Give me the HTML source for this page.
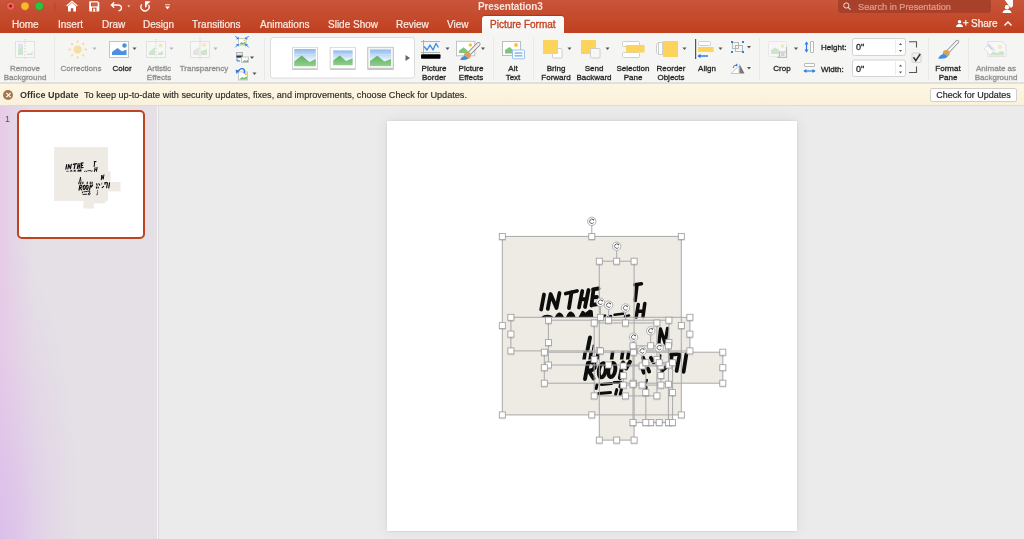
<!DOCTYPE html>
<html><head><meta charset="utf-8">
<style>
*{margin:0;padding:0;box-sizing:border-box}
html,body{width:1024px;height:539px;overflow:hidden;background:#e9e9e9;font-family:"Liberation Sans",sans-serif}
.abs{position:absolute}
.lbl,.tab,#notif div,#title div,#left div{will-change:transform}
#title{position:absolute;left:0;top:0;width:1024px;height:33px;background:linear-gradient(#c9553a,#c0401f)}
.tab{position:absolute;top:17.5px;font-size:10px;color:#fbece6;white-space:nowrap;line-height:14px;-webkit-text-stroke:0.2px currentColor}
#ribbon{position:absolute;left:0;top:33px;width:1024px;height:50px;background:#f5f5f4;border-bottom:1px solid #e0e0e0}
.lbl{position:absolute;font-size:8px;line-height:9px;color:#262626;text-align:center;white-space:nowrap;-webkit-text-stroke:0.3px currentColor;margin-top:0.5px}
.dis{color:#8f8f8f}
.sep{position:absolute;top:6px;width:1px;height:42px;background:#e2e2e2}
.dd{position:absolute;width:0;height:0;border-left:2.5px solid transparent;border-right:2.5px solid transparent;border-top:3px solid #555}
#notif{position:absolute;left:0;top:83px;width:1024px;height:23px;background:linear-gradient(#fdf6e2,#faf1dc);border-top:0.5px solid #e2e0da;border-bottom:1.5px solid #dfdbd0;z-index:2}
#left{position:absolute;left:0;top:105px;width:157px;height:434px;background:radial-gradient(ellipse 80px 300px at 0 100%,rgba(218,190,235,0.9),rgba(225,200,232,0.4) 60%,rgba(228,224,230,0) 100%),linear-gradient(90deg,rgba(232,200,232,0.9) 0px,rgba(230,205,230,0.6) 14px,rgba(228,224,230,0) 34px),#e4e0e6}
#main{position:absolute;left:159px;top:105px;width:865px;height:434px;background:#ebebeb}
#slide{position:absolute;left:387px;top:121px;width:410px;height:410px;background:#fff;box-shadow:0 0 2px rgba(0,0,0,0.12),0 0 14px rgba(0,0,0,0.07)}
</style></head><body>
<div id="title">
  <div class="tab" style="left:12px">Home</div>
  <div class="tab" style="left:58px">Insert</div>
  <div class="tab" style="left:102px">Draw</div>
  <div class="tab" style="left:143px">Design</div>
  <div class="tab" style="left:192px">Transitions</div>
  <div class="tab" style="left:260px">Animations</div>
  <div class="tab" style="left:328px">Slide Show</div>
  <div class="tab" style="left:396px">Review</div>
  <div class="tab" style="left:447px">View</div>
  <div class="abs" style="left:481.6px;top:16.4px;width:82px;height:16.6px;background:linear-gradient(#fdfdfd,#f5f5f4);border-radius:3px 3px 0 0;box-shadow:0 -0.5px 1px rgba(100,20,0,0.3)"></div>
  <div class="tab" style="left:490px;color:#c64524;-webkit-text-stroke:0.35px currentColor">Picture Format</div>
  <div class="abs" style="left:478.3px;top:0px;font-size:10px;letter-spacing:-0.12px;font-weight:bold;color:#f8e6df;line-height:13px">Presentation3</div>
  <div class="abs" style="left:838px;top:-1px;width:153px;height:14px;background:#a9402a;border-radius:3px"></div>
  <div class="abs" style="left:858px;top:0.5px;font-size:9.2px;color:#dda08e;line-height:13px;-webkit-text-stroke:0.2px currentColor">Search in Presentation</div>
  <div class="abs" style="left:971px;top:16.5px;font-size:10px;color:#fbeee8;line-height:13px;-webkit-text-stroke:0.25px currentColor">Share</div>
<svg class="abs" style="left:0;top:0" width="1024" height="33" viewBox="0 0 1024 33">
 <circle cx="10.6" cy="6.1" r="4.2" fill="#f25f58" stroke="#b8402e" stroke-width="0.7"/>
 <circle cx="10.6" cy="6.1" r="1.35" fill="#7e1a14"/>
 <circle cx="25" cy="6.1" r="4.2" fill="#fbb92e" stroke="#c0622a" stroke-width="0.7"/>
 <circle cx="39.2" cy="6.1" r="4.2" fill="#27c540" stroke="#3f8a2f" stroke-width="0.7"/>
 <rect x="54.5" y="2" width="0.8" height="10" fill="#b3432b"/>
 <!-- home -->
 <path d="M66.6 6 L72 1.2 L77.4 6" fill="none" stroke="#fff" stroke-width="1.2" stroke-linejoin="miter"/>
 <path d="M68 11.5 V6.2 L72 2.8 L76 6.2 V11.5 H73.3 V8.6 Q72 7.4 70.8 8.6 V11.5Z" fill="#fff"/>
 <!-- save -->
 <path d="M89.2 2 Q89.2 1.3 90 1.3 H97.8 L99.3 2.8 V10.8 Q99.3 11.5 98.5 11.5 H90 Q89.2 11.5 89.2 10.8Z" fill="#fff"/>
 <rect x="91" y="2.5" width="6.6" height="3.9" fill="#c9502f"/>
 <rect x="91.8" y="3.3" width="5" height="2.3" fill="#d8846d" opacity="0.5"/>
 <rect x="92" y="7.6" width="4.5" height="3.9" fill="#c9502f"/>
 <rect x="93.2" y="8.6" width="2" height="2.9" fill="#fff"/>
 <!-- undo -->
 <path d="M111.8 5 H117.5 Q121.5 5 121.5 8 Q121.5 10.5 118.5 10.8" fill="none" stroke="#fff" stroke-width="1.3"/>
 <path d="M114.2 2.2 L111.4 5 L114.2 7.8" fill="none" stroke="#fff" stroke-width="1.3"/>
 <path d="M127.3 5.3 H130.3 L128.8 7.4Z" fill="#f2c2b2"/>
 <!-- redo -->
 <path d="M141.7 4.4 A4.1 4.1 0 1 0 148.6 4.8" fill="none" stroke="#fff" stroke-width="1.35"/>
 <path d="M145 1.3 H150.6 L146.6 5.3 V7.2 H145Z" fill="#fff"/>
 <!-- customize -->
 <rect x="165" y="4" width="5" height="1.3" fill="#f0b7a6"/>
 <path d="M165 6.4 H170 L167.5 9.2Z" fill="#fff"/>
 <!-- search -->
 <circle cx="846.3" cy="5.5" r="2.6" fill="none" stroke="#f3ddd6" stroke-width="1"/>
 <path d="M848.2 7.4 L850.5 9.7" stroke="#f3ddd6" stroke-width="1.1"/>
 <!-- person icon top right -->
 <path d="M1004 -1 H1013 V6 L1011 8 L1009 6 Z" fill="#fff" opacity="0.95"/>
 <circle cx="1007" cy="7.2" r="2.2" fill="#fff"/>
 <path d="M1002.5 13 Q1003 9.8 1007 9.8 Q1011 9.8 1011.5 13Z" fill="#fff"/>
 <!-- share person+ -->
 <circle cx="959.5" cy="21.7" r="1.8" fill="#fff"/>
 <path d="M956 27 Q956.3 24 959.5 24 Q962.7 24 963 27Z" fill="#fff"/>
 <path d="M963 22.8 H968.5 M965.8 20 V25.6" stroke="#fff" stroke-width="1.1"/>
 <!-- chevron -->
 <path d="M1004.5 25.5 L1008 22 L1011.5 25.5" fill="none" stroke="#fff" stroke-width="1.4"/>
</svg>
</div>
<div id="ribbon"></div>
<svg class="abs" style="left:0;top:0" width="1024" height="84" viewBox="0 0 1024 84">
 <!-- separators -->
 <g fill="#e9e9e9">
  <rect x="54" y="36" width="1" height="43"/><rect x="264" y="38" width="1" height="42"/>
  <rect x="493" y="38" width="1" height="42"/><rect x="533" y="38" width="1" height="42"/>
  <rect x="759" y="38" width="1" height="42"/><rect x="928" y="38" width="1" height="42"/>
  <rect x="968" y="38" width="1" height="42"/>
 </g>
 <!-- Remove background (disabled) -->
 <g opacity="0.45">
  <rect x="15.5" y="41.5" width="19" height="16" fill="#fafafa" stroke="#c9c9c9"/>
  <path d="M18 55 V44 L20 43 L22 44.5 L23 43 V55Z" fill="#bcd4ef"/>
  <path d="M18 55 V50 L23 46 V55Z M27 55 V53 L29 54 L31.5 53 L32.5 50.5 V55Z" fill="#9fd39a"/>
  <path d="M25 39 V59" stroke="#aaa" stroke-dasharray="1.5 1.5"/>
 </g>
 <!-- Corrections sun (disabled) -->
 <g fill="#f5dea3" transform="translate(77.6 49.6)">
  <circle r="4"/>
  <g id="ray"><rect x="-1" y="-9.5" width="2" height="3" rx="1"/></g>
  <use href="#ray" transform="rotate(45)"/><use href="#ray" transform="rotate(90)"/><use href="#ray" transform="rotate(135)"/>
  <use href="#ray" transform="rotate(180)"/><use href="#ray" transform="rotate(225)"/><use href="#ray" transform="rotate(270)"/><use href="#ray" transform="rotate(315)"/>
 </g>
 <!-- Color -->
 <rect x="109.5" y="41.5" width="19" height="16" fill="#fff" stroke="#c4c4c4"/>
 <path d="M112 55 V52 L117.5 48 L122 51.5 L126.5 49.5 V55Z" fill="#4a90e2"/>
 <circle cx="124.5" cy="45.5" r="2.2" fill="#4a90e2"/>
 <!-- Artistic effects disabled -->
 <g opacity="0.45">
  <rect x="146.5" y="41.5" width="19" height="16" fill="#fafafa" stroke="#c9c9c9"/>
  <path d="M149 55 V52 L155 47 V55Z M158 55 V52 L160 53 L162 51 L163 52 V55Z" fill="#9fd39a"/>
  <circle cx="160.5" cy="45.5" r="2" fill="#f5d48a"/>
  <path d="M156 39 V59" stroke="#aaa" stroke-dasharray="1.5 1.5"/>
 </g>
 <!-- Transparency disabled -->
 <g opacity="0.45">
  <rect x="190.5" y="41.5" width="19" height="16" fill="#fafafa" stroke="#c9c9c9"/>
  <path d="M193 55 V51 L199 47 V55Z" fill="#cfcfcf"/>
  <path d="M201 55 V51 L207 49 V55Z" fill="#9fd39a"/>
  <circle cx="204" cy="45" r="2" fill="#f5d48a"/>
  <path d="M200 38 V60" stroke="#999" stroke-dasharray="1.2 1.2"/>
 </g>
 <!-- Compress -->
 <g>
  <rect x="238.5" y="38.5" width="7.5" height="6.5" fill="#fff" stroke="#bbb" stroke-width="0.8"/>
  <path d="M239.3 44.5 L241.5 42 L243 43 L245.5 41.8 V44.5Z" fill="#6cc16a"/>
  <circle cx="244.3" cy="40.2" r="0.8" fill="#f5c33b"/>
  <path d="M235.3 36 L238.3 39 M248.7 36 L245.7 39 M235.3 47.3 L238.3 44.3 M248.7 47.3 L245.7 44.3" stroke="#2f7fdc" stroke-width="1"/>
  <path d="M236 39.2 H238.6 V36.6Z M248 39.2 H245.4 V36.6Z M236 44.1 H238.6 V46.7Z M248 44.1 H245.4 V46.7Z" fill="#2f7fdc"/>
 </g>
 <!-- Change picture -->
 <g>
  <rect x="236.5" y="52.5" width="6" height="5" fill="#d7e6f6" stroke="#aaa" stroke-width="0.8"/>
  <rect x="236.5" y="55.5" width="6" height="2" fill="#333"/>
  <rect x="241.5" y="57" width="7" height="5.5" fill="#fff" stroke="#bbb" stroke-width="0.8"/>
  <path d="M242.5 62 L244.5 60 L246 61 L248 59.5 V62Z" fill="#6cc16a"/>
  <path d="M237 58.5 V61 H240" stroke="#2f7fdc" stroke-width="1" fill="none"/>
 </g>
 <!-- Reset picture -->
 <g>
  <rect x="238.5" y="72" width="9" height="8" fill="#fff" stroke="#bbb" stroke-width="0.8"/>
  <path d="M239.3 79.5 L242 77 L244 78 L246.8 76.3 V79.5Z" fill="#6cc16a"/>
  <circle cx="246" cy="74.2" r="1.1" fill="#f5c33b"/>
  <path d="M238 71.8 Q240 67.5 243.5 69 Q245.5 70.5 244 73.5" stroke="#2f7fdc" stroke-width="1.4" fill="none"/>
  <path d="M235.5 69.8 L239.8 70.2 L236.5 74Z" fill="#2f7fdc"/>
 </g>
 <!-- dropdowns -->
 <g fill="#555">
  <path d="M92.5 47.5 h4 l-2 2.5z" fill="#b5b5b5"/>
  <path d="M132.5 47.5 h4 l-2 2.5z"/>
  <path d="M169.5 47.5 h4 l-2 2.5z" fill="#b5b5b5"/>
  <path d="M213.5 47.5 h4 l-2 2.5z" fill="#b5b5b5"/>
  <path d="M250 56.5 h4 l-2 2.5z"/>
  <path d="M252.5 72.5 h4 l-2 2.5z"/>
  <path d="M445.5 47.5 h4 l-2 2.5z"/>
  <path d="M481 47.5 h4 l-2 2.5z"/>
  <path d="M567.5 47.5 h4 l-2 2.5z"/>
  <path d="M605.5 47.5 h4 l-2 2.5z"/>
  <path d="M682.5 47.5 h4 l-2 2.5z"/>
  <path d="M718.5 47.5 h4 l-2 2.5z"/>
  <path d="M747 46 h4 l-2 2.5z"/>
  <path d="M747 67 h4 l-2 2.5z"/>
  <path d="M794 47.5 h4 l-2 2.5z"/>
 </g>
 <!-- Gallery -->
 <rect x="270.5" y="37.5" width="144" height="40.5" rx="2.5" fill="#fff" stroke="#dcdcdc"/>
 <defs>
  <linearGradient id="sky" x1="0" y1="0" x2="0" y2="1"><stop offset="0" stop-color="#8ebbee"/><stop offset="0.6" stop-color="#e6f0fb"/><stop offset="1" stop-color="#f4f8fd"/></linearGradient>
  <linearGradient id="grn" x1="0" y1="0" x2="0" y2="1"><stop offset="0" stop-color="#5faf60"/><stop offset="1" stop-color="#8fd08c"/></linearGradient>
  <filter id="gsh" x="-20%" y="-20%" width="140%" height="150%"><feDropShadow dx="0" dy="0.8" stdDeviation="0.6" flood-color="#000" flood-opacity="0.35"/></filter>
 </defs>
 <rect x="292.5" y="47.3" width="25" height="21" fill="#fff" stroke="#cfcfcf" stroke-width="0.7" filter="url(#gsh)"/>
 <rect x="294.2" y="49" width="21.6" height="17.2" fill="url(#sky)"/>
 <path d="M294.2 66.2 V61.5 L301.8 55.5 L309.5 62 L315.8 59 V66.2Z" fill="url(#grn)"/>
 <path d="M294.2 54.5 H315.8" stroke="#fff" stroke-width="0.5" stroke-dasharray="0.8 1" opacity="0.8"/>
 <rect x="330.2" y="47.3" width="25.3" height="21" fill="#fff" stroke="#cfcfcf" stroke-width="0.7" filter="url(#gsh)"/>
 <rect x="333.2" y="50.4" width="19.4" height="14.8" fill="url(#sky)"/>
 <path d="M333.2 65.2 V60.5 L339.8 55.6 L346 61 L352.6 58.6 V65.2Z" fill="url(#grn)"/>
 <path d="M333.2 54.5 H352.6" stroke="#fff" stroke-width="0.5" stroke-dasharray="0.8 1" opacity="0.8"/>
 <rect x="367.8" y="47.3" width="25.5" height="21" fill="#f4f4f4" stroke="#c4c4c4" stroke-width="0.9" filter="url(#gsh)"/>
 <rect x="370" y="49.5" width="21" height="16.5" fill="url(#sky)"/>
 <path d="M370 66 V61 L377.3 55.8 L384.5 61.6 L391 59 V66Z" fill="url(#grn)"/>
 <path d="M370 54.5 H391" stroke="#fff" stroke-width="0.5" stroke-dasharray="0.8 1" opacity="0.8"/>
 <path d="M405.5 55 L410 58 L405.5 61Z" fill="#666"/>
 <!-- Picture border -->
 <path d="M423.5 40 V54 M421 41.5 H440 M421 52.5 H440" stroke="#aaa" stroke-width="0.9" fill="none"/>
 <path d="M424 46.5 L427 50 L430 45 L433 50 L436 43.5 L438.5 47.5" stroke="#3d8ee6" stroke-width="1.4" fill="none" stroke-linejoin="round"/>
 <rect x="421" y="54.3" width="19.5" height="4.5" rx="1" fill="#000"/>
 <!-- Picture effects -->
 <rect x="456.5" y="41.3" width="18.3" height="14.5" fill="#fff" stroke="#bdbdbd" stroke-width="0.9"/>
 <path d="M459 53 V50.8 L463.5 47.2 L467.8 50.8 V53Z" fill="#7ec47b"/>
 <circle cx="470.3" cy="45" r="1.8" fill="#f7c534"/>
 <path d="M478.5 44 L468.8 54" stroke="#8a8a8a" stroke-width="4" stroke-linecap="round"/>
 <path d="M478.5 44 L468.8 54" stroke="#f4f4f4" stroke-width="2.5" stroke-linecap="round"/>
 <circle cx="467.4" cy="55.4" r="3.4" fill="#d6a060"/>
 <path d="M460 59.8 Q461.8 56.8 464.6 55.8 L468.4 58.4 Q465.5 60.8 460 59.8Z" fill="#3d8ee6"/>
 <!-- Alt text -->
 <rect x="502.5" y="41.5" width="18" height="14" fill="#fff" stroke="#bdbdbd"/>
 <path d="M505 53.5 V50 L509.5 47 L513 50 V53.5Z" fill="#7ec47b"/>
 <circle cx="516" cy="45" r="1.9" fill="#f7c534"/>
 <rect x="512.5" y="50" width="12" height="8.8" rx="0.8" fill="#fff" stroke="#8fbaee" stroke-width="0.9"/>
 <rect x="514.5" y="52.3" width="8" height="1.6" fill="#8fbaee"/><rect x="514.5" y="55" width="8" height="1.6" fill="#8fbaee"/>
 <!-- Bring forward -->
 <rect x="552.5" y="48.5" width="9.5" height="9.5" rx="1" fill="#fff" stroke="#c8c8c8" stroke-width="0.9"/>
 <rect x="543" y="40" width="15" height="14" fill="#fcd35b"/>
 <!-- Send backward -->
 <rect x="581" y="40" width="15" height="14" fill="#fcd35b"/>
 <rect x="590.5" y="48.5" width="9.5" height="9.5" rx="1" fill="#f7f7f7" stroke="#c8c8c8" stroke-width="0.9"/>
 <!-- Selection pane -->
 <rect x="622.5" y="41.5" width="17" height="5" rx="1" fill="#fff" stroke="#c8c8c8" stroke-width="0.9"/>
 <rect x="622.5" y="52.5" width="17" height="5" rx="1" fill="#fff" stroke="#c8c8c8" stroke-width="0.9"/>
 <rect x="626" y="45" width="18.5" height="7.5" fill="#fcd35b"/>
 <!-- Reorder objects -->
 <rect x="656.5" y="43.5" width="4" height="10" rx="1" fill="#fff" stroke="#c8c8c8" stroke-width="0.9"/>
 <rect x="658.5" y="42.5" width="4" height="12" fill="#fff" stroke="#c8c8c8" stroke-width="0.9"/>
 <rect x="663" y="41" width="15" height="16" fill="#fcd35b"/>
 <!-- Align -->
 <rect x="695" y="39" width="1.2" height="20" fill="#555"/>
 <rect x="698.5" y="41.5" width="12" height="4" rx="1" fill="#fff" stroke="#c8c8c8" stroke-width="0.9"/>
 <rect x="698" y="47" width="15.5" height="5" fill="#fcd35b"/>
 <path d="M698 56 H708" stroke="#2f7fdc" stroke-width="1.5"/><path d="M697.5 56 L700.5 53.8 V58.2Z" fill="#2f7fdc"/>
 <!-- Group -->
 <rect x="732.5" y="42.5" width="6" height="6" fill="none" stroke="#aaa" stroke-width="0.8"/>
 <rect x="735.5" y="45.5" width="7" height="6" fill="none" stroke="#aaa" stroke-width="0.8"/>
 <g fill="#2f7fdc"><rect x="731" y="41" width="2" height="2"/><rect x="742" y="41" width="2" height="2"/><rect x="731" y="51" width="2" height="2"/><rect x="742" y="51" width="2" height="2"/></g>
 <!-- Rotate -->
 <path d="M731 73.5 L739 66 V73.5Z" fill="#fff" stroke="#bbb" stroke-width="0.8"/>
 <path d="M739.5 64 L744.5 73.5 H739.5Z" fill="#777"/>
 <path d="M733 68 Q733.5 65 736.5 65" stroke="#2f7fdc" stroke-width="1" fill="none"/><path d="M736 63.5 L738 65 L736 66.5Z" fill="#2f7fdc"/>
 <!-- Crop disabled -->
 <g opacity="0.5">
  <rect x="768.5" y="41.5" width="18" height="15" rx="1" fill="#fafafa" stroke="#ddd"/>
  <path d="M771 54 V50 L775 47.5 L779 50 V54Z" fill="#a9d6a4"/>
  <circle cx="782.5" cy="46" r="1.8" fill="#f5d48a"/>
  <path d="M779.5 58 V52 H786.5 M777 57.5 H786.5 V47" stroke="#888" stroke-width="1.2" fill="none"/>
  <rect x="781" y="53" width="3.5" height="3" fill="#8fcf8a"/>
 </g>
 <!-- Height/Width icons -->
 <path d="M806.5 42 V52" stroke="#2f7fdc" stroke-width="1.2"/><path d="M804.5 44.5 L806.5 41.5 L808.5 44.5Z M804.5 49.5 L806.5 52.5 L808.5 49.5Z" fill="#2f7fdc"/>
 <rect x="810.5" y="41.5" width="3" height="11" rx="0.5" fill="#fff" stroke="#aaa" stroke-width="0.8"/>
 <rect x="804.5" y="63.5" width="10" height="3" rx="0.5" fill="#fff" stroke="#aaa" stroke-width="0.8"/>
 <path d="M804 71 H815" stroke="#2f7fdc" stroke-width="1.2"/><path d="M806.5 69 L803.5 71 L806.5 73Z M812.5 69 L815.5 71 L812.5 73Z" fill="#2f7fdc"/>
 <!-- inputs -->
 <rect x="852.5" y="38.5" width="53" height="17" rx="2" fill="#fff" stroke="#d3d3d3"/>
 <rect x="852.5" y="60" width="53" height="16.5" rx="2" fill="#fff" stroke="#d3d3d3"/>
 <path d="M895.5 40 V54 M895.5 61.5 V75" stroke="#ececec"/>
 <g fill="#555"><path d="M899 45 L900.5 43 L902 45Z M899 50 L900.5 52 L902 50Z M899 66.5 L900.5 64.5 L902 66.5Z M899 71.5 L900.5 73.5 L902 71.5Z"/></g>
 <!-- lock bracket -->
 <path d="M909 41.8 H916.5 V47.5 M909 72.5 H916.5 V66.5" stroke="#555" stroke-width="1.1" fill="none"/>
 <rect x="912" y="53" width="9" height="9.5" rx="1" fill="#f0f0f0" stroke="#ccc" stroke-width="0.8"/>
 <path d="M913.5 57.3 L915.8 60.6 L920.2 54" stroke="#333" stroke-width="1.5" fill="none"/>
 <!-- Format pane brush -->
 <path d="M957.3 41.8 L947.5 52" stroke="#8c8c8c" stroke-width="3.8" stroke-linecap="round"/>
 <path d="M957.3 41.8 L947.5 52" stroke="#f2f2f2" stroke-width="2.3" stroke-linecap="round"/>
 <circle cx="946.2" cy="53.3" r="3.4" fill="#d6a060"/>
 <path d="M938 58.6 Q939.8 55 943.6 53.8 L947.6 56.6 Q945.2 59.6 938 58.6Z" fill="#3d8ee6"/>
 <!-- Animate background disabled -->
 <g opacity="0.45">
  <path d="M987.5 41.5 H1002 L1006 45 V56.5 H987.5Z" fill="#fafafa" stroke="#ccc"/>
  <path d="M989 55.5 V53 L993 51.5 L997 53 L1001 51 L1004 52 V55.5Z" fill="#9fd39a"/>
  <circle cx="1000" cy="47" r="2" fill="#f5d48a"/>
  <path d="M984 49 L989 44 L995 50 L990 55Z" fill="#fff" stroke="#bbb" stroke-width="0.8"/>
  <path d="M988 45 L993 50" stroke="#6fa8ea" stroke-width="1.5"/>
 </g>
</svg>
<div class="lbl dis" style="left:-15px;width:80px;top:63.5px">Remove<br>Background</div>
<div class="lbl dis" style="left:41px;width:80px;top:63.5px">Corrections</div>
<div class="lbl" style="left:82px;width:80px;top:63.5px">Color</div>
<div class="lbl dis" style="left:118.5px;width:80px;top:63.5px">Artistic<br>Effects</div>
<div class="lbl dis" style="left:163.5px;width:80px;top:63.5px">Transparency</div>
<div class="lbl" style="left:394px;width:80px;top:63.5px">Picture<br>Border</div>
<div class="lbl" style="left:430.5px;width:80px;top:63.5px">Picture<br>Effects</div>
<div class="lbl" style="left:473px;width:80px;top:63.5px">Alt<br>Text</div>
<div class="lbl" style="left:515.5px;width:80px;top:63.5px">Bring<br>Forward</div>
<div class="lbl" style="left:554px;width:80px;top:63.5px">Send<br>Backward</div>
<div class="lbl" style="left:593px;width:80px;top:63.5px">Selection<br>Pane</div>
<div class="lbl" style="left:630.5px;width:80px;top:63.5px">Reorder<br>Objects</div>
<div class="lbl" style="left:666.5px;width:80px;top:63.5px">Align</div>
<div class="lbl" style="left:742px;width:80px;top:63.5px">Crop</div>
<div class="lbl" style="left:821px;top:42.3px">Height:</div>
<div class="lbl" style="left:821px;top:64px">Width:</div>
<div class="lbl" style="left:856px;top:42.5px;font-size:9px">0"</div>
<div class="lbl" style="left:856px;top:64px;font-size:9px">0"</div>
<div class="lbl" style="left:908px;width:80px;top:63.5px">Format<br>Pane</div>
<div class="lbl dis" style="left:956px;width:80px;top:63.5px">Animate as<br>Background</div>

<div id="notif">
  <div class="abs" style="left:3.3px;top:5.9px;width:10.4px;height:10.4px;border-radius:50%;background:#a27650"></div><svg class="abs" style="left:0;top:0" width="20" height="22"><path d="M6.3 8.9 L10.7 13.3 M10.7 8.9 L6.3 13.3" stroke="#fbf3e4" stroke-width="1.3"/></svg>
  <div class="abs" style="left:20px;top:6px;font-size:9px;font-weight:bold;color:#333;line-height:11px">Office Update</div>
  <div class="abs" style="left:84px;top:6px;font-size:9.15px;color:#2a2a2a;line-height:11px;-webkit-text-stroke:0.15px currentColor">To keep up-to-date with security updates, fixes, and improvements, choose Check for Updates.</div>
  <div class="abs" style="left:930px;top:4px;width:87px;height:14px;background:#fff;border:1px solid #cfcfcf;border-radius:2px;font-size:9px;color:#222;line-height:12px;text-align:center;-webkit-text-stroke:0.15px currentColor">Check for Updates</div>
</div>
<div id="left">
  <div class="abs" style="left:5px;top:9px;font-size:9px;color:#555">1</div>
  <div class="abs" style="left:17px;top:5px;width:128.2px;height:128.5px;border:2.4px solid #c0431f;border-radius:5px;background:#fff"></div>
</div>
<div class="abs" style="left:157px;top:105px;width:2px;height:434px;background:#f7f7f7;border-right:0.6px solid #dcdcdc"></div>
<div id="main"></div>
<div id="slide"></div>
<svg class="abs" style="left:0;top:0" width="160" height="250" viewBox="0 0 160 250"><use href="#content" transform="translate(19.4 112.4) scale(0.3012) translate(-387 -121)"/></svg>
<!--SLIDE--><svg class="abs" style="left:0;top:0" width="1024" height="539" viewBox="0 0 1024 539">
<defs>
<filter id="sh" x="-50%" y="-50%" width="200%" height="200%"><feDropShadow dx="0" dy="0.5" stdDeviation="0.5" flood-opacity="0.25"/></filter>
<clipPath id="cA"><rect x="502.3" y="236.4" width="179" height="178.5"/></clipPath><clipPath id="cRoomTop"><rect x="530" y="305" width="69" height="12.3"/></clipPath><clipPath id="cRow"><rect x="570" y="351.5" width="70" height="8"/></clipPath><clipPath id="cISH"><rect x="590" y="380" width="40" height="16"/></clipPath>
</defs>
<g id="content"><rect x="502.3" y="236.4" width="179.0" height="178.5" fill="#eeeae4"/><rect x="599.3" y="261.2" width="34.8" height="178.9" fill="#eeeae4"/><rect x="510.9" y="317.3" width="179.0" height="33.6" fill="#eeeae4"/><rect x="548.4" y="320.2" width="120.5" height="44.8" fill="#eeeae4"/><rect x="544.3" y="352.2" width="178.5" height="31.0" fill="#eeeae4"/><rect x="594.2" y="323.0" width="62.7" height="72.9" fill="#eeeae4"/><rect x="633.0" y="345.8" width="35.4" height="76.8" fill="#eeeae4"/><rect x="623.3" y="366.0" width="37.6" height="19.1" fill="#eeeae4"/><rect x="645.8" y="362.7" width="26.8" height="59.9" fill="#eeeae4"/>
<g fill="none" stroke="#0d0d0d" stroke-linecap="round" stroke-linejoin="round">
 <!-- IN THE (A) -->
 <g stroke-width="3.8">
  <path d="M541.2 309.5 L544 294.5"/>
  <path d="M547.8 308.8 L550.6 294 L556.5 308 L559.5 293"/>
  <path d="M565.8 293.5 L577 291"/>
  <path d="M571.5 292.5 L569 308"/>
  <path d="M579 307.5 L582.3 291 M585 307 L588.5 290 M580.5 299.5 L587 298.8"/>
  <path d="M591.5 305.5 L593.5 289.5 M593 289.3 L598.5 288.5 M592.5 297.5 L597 297 M591.5 305 L598.5 304"/>
 </g>
 <!-- ROOM tops -->
 <g fill="#0d0d0d" stroke="none">
  <path d="M541 317.2 Q545.5 313.2 552.5 316 V317.2Z"/>
  <path d="M554.8 317.2 Q556.8 312.3 559.8 312.4 Q563 313.5 563.8 317.2Z"/>
  <path d="M566 317.2 Q568 311.2 571.3 311.6 Q574.5 313 575.5 317.2Z"/>
  <path d="M578.5 317.2 L581.8 311 Q583.8 310.2 585.2 312.8 L589.2 309.8 Q592.8 309.4 592.8 311.5 L593.2 317.2Z"/>
 </g>
 <!-- T and H right of B -->
 <g stroke-width="3.5">
  <path d="M635 284.8 L641.5 283.8"/>
  <path d="M637 285 L635.2 300.5"/>
  <path d="M636.2 317 L638.3 304.5 M643 316.5 L644.8 303.5 M637 311.5 L643.5 311"/>
 </g>
 <g stroke-width="2.6">
  <path d="M614.5 314.8 L623 313.8"/>
  <path d="M603 317 L605 315.5 M608 317.5 L611 316"/>
  <path d="M625 316.5 L629 315.5"/>
 </g>
 <!-- I middle -->
 <g stroke-width="3.9">
  <path d="M590 337.5 L587.5 349.8"/>
 </g>
 <path d="M593.3 345 L592.3 350.5" stroke-width="1.2"/>
 <!-- N upper right -->
 <g stroke-width="3.3">
  <path d="M658.8 344.5 L660.5 329 L665 343 L667.5 328.5"/>
 </g>
 <!-- IN THE bottoms row (E) -->
 <g stroke-width="3.5" clip-path="url(#cRow)">
  <path d="M584 360 L585.5 350 M590 360 L591.5 350 M597 360 L598.5 350 M611.5 360 L613 350 M621.5 360 L623 350 M627.5 360 L629 350"/>
 </g>
 <!-- ROOM (E) -->
 <g stroke-width="3.9">
  <path d="M585 379 L588 362.8 Q596 361 594.5 368 Q592.5 371 588.5 370.5 L593.5 378.5"/>
  <ellipse cx="602.3" cy="370.3" rx="3.4" ry="7.2" transform="rotate(10 602.3 370.3)"/>
  <ellipse cx="611.8" cy="370" rx="3.4" ry="7.2" transform="rotate(10 611.8 370)"/>
  <path d="M619.8 378 L623 362.5 L626.2 368.5 L630 361.8"/>
 </g>
 <!-- WITH frag (E) -->
 <g stroke-width="3.8">
  <path d="M670.8 354.6 L677 354"/>
  <path d="M671.6 355 L671.2 359.5"/>
  <path d="M679.6 354.5 L676.6 370.8 M686.3 354.5 L683.6 371.8"/>
  <path d="M643.2 357.8 L645 363 M650.8 357.8 L653.6 362.3"/>
  <path d="M642.6 368.8 L643.8 372.8 M648 368.6 L649.2 371.6"/>
  <path d="M666.5 366.8 L661.8 370.8"/>
  <path d="M660.6 355.2 L660.2 359.5" stroke-width="1.8"/>
 </g>
 <!-- ISH (F) -->
 <g stroke-width="3">
  <path d="M596.2 388.5 L597 384.8"/>
  <path d="M601.5 384.6 L611.5 383.6"/>
  <path d="M614 382.6 L620.8 382.2 L620 387"/>
  <path d="M598.5 393.6 L610.5 392.6"/>
  <path d="M615.6 394.4 L616.8 389.6 M620.2 394.4 L621.4 389.6"/>
 </g>
 <g stroke-width="2.2">
  <path d="M646 383 L647 380 M645.5 392.5 L646.5 387"/>
  <path d="M644.5 395 L645 393"/>
 </g>
</g>
</g>
<rect x="502.3" y="236.4" width="179.0" height="178.5" fill="none" stroke="#a9a9a9" stroke-width="1"/><line x1="591.8" y1="225.4" x2="591.8" y2="236.4" stroke="#a9a9a9" stroke-width="1"/><rect x="599.3" y="261.2" width="34.8" height="178.9" fill="none" stroke="#a9a9a9" stroke-width="1"/><line x1="616.7" y1="250.2" x2="616.7" y2="261.2" stroke="#a9a9a9" stroke-width="1"/><rect x="510.9" y="317.3" width="179.0" height="33.6" fill="none" stroke="#a9a9a9" stroke-width="1"/><line x1="600.4" y1="306.3" x2="600.4" y2="317.3" stroke="#a9a9a9" stroke-width="1"/><rect x="548.4" y="320.2" width="120.5" height="44.8" fill="none" stroke="#a9a9a9" stroke-width="1"/><line x1="608.6" y1="309.2" x2="608.6" y2="320.2" stroke="#a9a9a9" stroke-width="1"/><rect x="544.3" y="352.2" width="178.5" height="31.0" fill="none" stroke="#a9a9a9" stroke-width="1"/><line x1="633.5" y1="341.2" x2="633.5" y2="352.2" stroke="#a9a9a9" stroke-width="1"/><rect x="594.2" y="323.0" width="62.7" height="72.9" fill="none" stroke="#a9a9a9" stroke-width="1"/><line x1="625.5" y1="312.0" x2="625.5" y2="323.0" stroke="#a9a9a9" stroke-width="1"/><rect x="633.0" y="345.8" width="35.4" height="76.8" fill="none" stroke="#a9a9a9" stroke-width="1"/><line x1="650.7" y1="334.8" x2="650.7" y2="345.8" stroke="#a9a9a9" stroke-width="1"/><rect x="623.3" y="366.0" width="37.6" height="19.1" fill="none" stroke="#a9a9a9" stroke-width="1"/><line x1="642.1" y1="355.0" x2="642.1" y2="366.0" stroke="#a9a9a9" stroke-width="1"/><rect x="645.8" y="362.7" width="26.8" height="59.9" fill="none" stroke="#a9a9a9" stroke-width="1"/><line x1="659.2" y1="351.7" x2="659.2" y2="362.7" stroke="#a9a9a9" stroke-width="1"/><rect x="499.3" y="233.4" width="6" height="6" fill="#fff" stroke="#9e9e9e" stroke-width="0.8" filter="url(#sh)"/><rect x="588.8" y="233.4" width="6" height="6" fill="#fff" stroke="#9e9e9e" stroke-width="0.8" filter="url(#sh)"/><rect x="678.3" y="233.4" width="6" height="6" fill="#fff" stroke="#9e9e9e" stroke-width="0.8" filter="url(#sh)"/><rect x="499.3" y="322.6" width="6" height="6" fill="#fff" stroke="#9e9e9e" stroke-width="0.8" filter="url(#sh)"/><rect x="678.3" y="322.6" width="6" height="6" fill="#fff" stroke="#9e9e9e" stroke-width="0.8" filter="url(#sh)"/><rect x="499.3" y="411.9" width="6" height="6" fill="#fff" stroke="#9e9e9e" stroke-width="0.8" filter="url(#sh)"/><rect x="588.8" y="411.9" width="6" height="6" fill="#fff" stroke="#9e9e9e" stroke-width="0.8" filter="url(#sh)"/><rect x="678.3" y="411.9" width="6" height="6" fill="#fff" stroke="#9e9e9e" stroke-width="0.8" filter="url(#sh)"/><g transform="translate(591.8 221.4)"><circle r="4.2" fill="#fff" stroke="#9e9e9e" stroke-width="0.8"/><path d="M1.6 -1.6 A2.2 2.2 0 1 0 2 1" fill="none" stroke="#555" stroke-width="0.9"/><path d="M0.6 -2.6 L2.6 -2.2 L2 -0.4Z" fill="#555"/></g><rect x="596.3" y="258.2" width="6" height="6" fill="#fff" stroke="#9e9e9e" stroke-width="0.8" filter="url(#sh)"/><rect x="613.7" y="258.2" width="6" height="6" fill="#fff" stroke="#9e9e9e" stroke-width="0.8" filter="url(#sh)"/><rect x="631.1" y="258.2" width="6" height="6" fill="#fff" stroke="#9e9e9e" stroke-width="0.8" filter="url(#sh)"/><rect x="596.3" y="347.6" width="6" height="6" fill="#fff" stroke="#9e9e9e" stroke-width="0.8" filter="url(#sh)"/><rect x="631.1" y="347.6" width="6" height="6" fill="#fff" stroke="#9e9e9e" stroke-width="0.8" filter="url(#sh)"/><rect x="596.3" y="437.1" width="6" height="6" fill="#fff" stroke="#9e9e9e" stroke-width="0.8" filter="url(#sh)"/><rect x="613.7" y="437.1" width="6" height="6" fill="#fff" stroke="#9e9e9e" stroke-width="0.8" filter="url(#sh)"/><rect x="631.1" y="437.1" width="6" height="6" fill="#fff" stroke="#9e9e9e" stroke-width="0.8" filter="url(#sh)"/><g transform="translate(616.7 246.2)"><circle r="4.2" fill="#fff" stroke="#9e9e9e" stroke-width="0.8"/><path d="M1.6 -1.6 A2.2 2.2 0 1 0 2 1" fill="none" stroke="#555" stroke-width="0.9"/><path d="M0.6 -2.6 L2.6 -2.2 L2 -0.4Z" fill="#555"/></g><rect x="507.9" y="314.3" width="6" height="6" fill="#fff" stroke="#9e9e9e" stroke-width="0.8" filter="url(#sh)"/><rect x="597.4" y="314.3" width="6" height="6" fill="#fff" stroke="#9e9e9e" stroke-width="0.8" filter="url(#sh)"/><rect x="686.9" y="314.3" width="6" height="6" fill="#fff" stroke="#9e9e9e" stroke-width="0.8" filter="url(#sh)"/><rect x="507.9" y="331.1" width="6" height="6" fill="#fff" stroke="#9e9e9e" stroke-width="0.8" filter="url(#sh)"/><rect x="686.9" y="331.1" width="6" height="6" fill="#fff" stroke="#9e9e9e" stroke-width="0.8" filter="url(#sh)"/><rect x="507.9" y="347.9" width="6" height="6" fill="#fff" stroke="#9e9e9e" stroke-width="0.8" filter="url(#sh)"/><rect x="597.4" y="347.9" width="6" height="6" fill="#fff" stroke="#9e9e9e" stroke-width="0.8" filter="url(#sh)"/><rect x="686.9" y="347.9" width="6" height="6" fill="#fff" stroke="#9e9e9e" stroke-width="0.8" filter="url(#sh)"/><g transform="translate(600.4 302.3)"><circle r="4.2" fill="#fff" stroke="#9e9e9e" stroke-width="0.8"/><path d="M1.6 -1.6 A2.2 2.2 0 1 0 2 1" fill="none" stroke="#555" stroke-width="0.9"/><path d="M0.6 -2.6 L2.6 -2.2 L2 -0.4Z" fill="#555"/></g><rect x="545.4" y="317.2" width="6" height="6" fill="#fff" stroke="#9e9e9e" stroke-width="0.8" filter="url(#sh)"/><rect x="605.6" y="317.2" width="6" height="6" fill="#fff" stroke="#9e9e9e" stroke-width="0.8" filter="url(#sh)"/><rect x="665.9" y="317.2" width="6" height="6" fill="#fff" stroke="#9e9e9e" stroke-width="0.8" filter="url(#sh)"/><rect x="545.4" y="339.6" width="6" height="6" fill="#fff" stroke="#9e9e9e" stroke-width="0.8" filter="url(#sh)"/><rect x="665.9" y="339.6" width="6" height="6" fill="#fff" stroke="#9e9e9e" stroke-width="0.8" filter="url(#sh)"/><rect x="545.4" y="362.0" width="6" height="6" fill="#fff" stroke="#9e9e9e" stroke-width="0.8" filter="url(#sh)"/><rect x="605.6" y="362.0" width="6" height="6" fill="#fff" stroke="#9e9e9e" stroke-width="0.8" filter="url(#sh)"/><rect x="665.9" y="362.0" width="6" height="6" fill="#fff" stroke="#9e9e9e" stroke-width="0.8" filter="url(#sh)"/><g transform="translate(608.6 305.2)"><circle r="4.2" fill="#fff" stroke="#9e9e9e" stroke-width="0.8"/><path d="M1.6 -1.6 A2.2 2.2 0 1 0 2 1" fill="none" stroke="#555" stroke-width="0.9"/><path d="M0.6 -2.6 L2.6 -2.2 L2 -0.4Z" fill="#555"/></g><rect x="541.3" y="349.2" width="6" height="6" fill="#fff" stroke="#9e9e9e" stroke-width="0.8" filter="url(#sh)"/><rect x="630.5" y="349.2" width="6" height="6" fill="#fff" stroke="#9e9e9e" stroke-width="0.8" filter="url(#sh)"/><rect x="719.8" y="349.2" width="6" height="6" fill="#fff" stroke="#9e9e9e" stroke-width="0.8" filter="url(#sh)"/><rect x="541.3" y="364.7" width="6" height="6" fill="#fff" stroke="#9e9e9e" stroke-width="0.8" filter="url(#sh)"/><rect x="719.8" y="364.7" width="6" height="6" fill="#fff" stroke="#9e9e9e" stroke-width="0.8" filter="url(#sh)"/><rect x="541.3" y="380.2" width="6" height="6" fill="#fff" stroke="#9e9e9e" stroke-width="0.8" filter="url(#sh)"/><rect x="630.5" y="380.2" width="6" height="6" fill="#fff" stroke="#9e9e9e" stroke-width="0.8" filter="url(#sh)"/><rect x="719.8" y="380.2" width="6" height="6" fill="#fff" stroke="#9e9e9e" stroke-width="0.8" filter="url(#sh)"/><g transform="translate(633.5 337.2)"><circle r="4.2" fill="#fff" stroke="#9e9e9e" stroke-width="0.8"/><path d="M1.6 -1.6 A2.2 2.2 0 1 0 2 1" fill="none" stroke="#555" stroke-width="0.9"/><path d="M0.6 -2.6 L2.6 -2.2 L2 -0.4Z" fill="#555"/></g><rect x="591.2" y="320.0" width="6" height="6" fill="#fff" stroke="#9e9e9e" stroke-width="0.8" filter="url(#sh)"/><rect x="622.5" y="320.0" width="6" height="6" fill="#fff" stroke="#9e9e9e" stroke-width="0.8" filter="url(#sh)"/><rect x="653.9" y="320.0" width="6" height="6" fill="#fff" stroke="#9e9e9e" stroke-width="0.8" filter="url(#sh)"/><rect x="591.2" y="356.4" width="6" height="6" fill="#fff" stroke="#9e9e9e" stroke-width="0.8" filter="url(#sh)"/><rect x="653.9" y="356.4" width="6" height="6" fill="#fff" stroke="#9e9e9e" stroke-width="0.8" filter="url(#sh)"/><rect x="591.2" y="392.9" width="6" height="6" fill="#fff" stroke="#9e9e9e" stroke-width="0.8" filter="url(#sh)"/><rect x="622.5" y="392.9" width="6" height="6" fill="#fff" stroke="#9e9e9e" stroke-width="0.8" filter="url(#sh)"/><rect x="653.9" y="392.9" width="6" height="6" fill="#fff" stroke="#9e9e9e" stroke-width="0.8" filter="url(#sh)"/><g transform="translate(625.5 308.0)"><circle r="4.2" fill="#fff" stroke="#9e9e9e" stroke-width="0.8"/><path d="M1.6 -1.6 A2.2 2.2 0 1 0 2 1" fill="none" stroke="#555" stroke-width="0.9"/><path d="M0.6 -2.6 L2.6 -2.2 L2 -0.4Z" fill="#555"/></g><rect x="630.0" y="342.8" width="6" height="6" fill="#fff" stroke="#9e9e9e" stroke-width="0.8" filter="url(#sh)"/><rect x="647.7" y="342.8" width="6" height="6" fill="#fff" stroke="#9e9e9e" stroke-width="0.8" filter="url(#sh)"/><rect x="665.4" y="342.8" width="6" height="6" fill="#fff" stroke="#9e9e9e" stroke-width="0.8" filter="url(#sh)"/><rect x="630.0" y="381.2" width="6" height="6" fill="#fff" stroke="#9e9e9e" stroke-width="0.8" filter="url(#sh)"/><rect x="665.4" y="381.2" width="6" height="6" fill="#fff" stroke="#9e9e9e" stroke-width="0.8" filter="url(#sh)"/><rect x="630.0" y="419.6" width="6" height="6" fill="#fff" stroke="#9e9e9e" stroke-width="0.8" filter="url(#sh)"/><rect x="647.7" y="419.6" width="6" height="6" fill="#fff" stroke="#9e9e9e" stroke-width="0.8" filter="url(#sh)"/><rect x="665.4" y="419.6" width="6" height="6" fill="#fff" stroke="#9e9e9e" stroke-width="0.8" filter="url(#sh)"/><g transform="translate(650.7 330.8)"><circle r="4.2" fill="#fff" stroke="#9e9e9e" stroke-width="0.8"/><path d="M1.6 -1.6 A2.2 2.2 0 1 0 2 1" fill="none" stroke="#555" stroke-width="0.9"/><path d="M0.6 -2.6 L2.6 -2.2 L2 -0.4Z" fill="#555"/></g><rect x="620.3" y="363.0" width="6" height="6" fill="#fff" stroke="#9e9e9e" stroke-width="0.8" filter="url(#sh)"/><rect x="639.1" y="363.0" width="6" height="6" fill="#fff" stroke="#9e9e9e" stroke-width="0.8" filter="url(#sh)"/><rect x="657.9" y="363.0" width="6" height="6" fill="#fff" stroke="#9e9e9e" stroke-width="0.8" filter="url(#sh)"/><rect x="620.3" y="372.6" width="6" height="6" fill="#fff" stroke="#9e9e9e" stroke-width="0.8" filter="url(#sh)"/><rect x="657.9" y="372.6" width="6" height="6" fill="#fff" stroke="#9e9e9e" stroke-width="0.8" filter="url(#sh)"/><rect x="620.3" y="382.1" width="6" height="6" fill="#fff" stroke="#9e9e9e" stroke-width="0.8" filter="url(#sh)"/><rect x="639.1" y="382.1" width="6" height="6" fill="#fff" stroke="#9e9e9e" stroke-width="0.8" filter="url(#sh)"/><rect x="657.9" y="382.1" width="6" height="6" fill="#fff" stroke="#9e9e9e" stroke-width="0.8" filter="url(#sh)"/><g transform="translate(642.1 351.0)"><circle r="4.2" fill="#fff" stroke="#9e9e9e" stroke-width="0.8"/><path d="M1.6 -1.6 A2.2 2.2 0 1 0 2 1" fill="none" stroke="#555" stroke-width="0.9"/><path d="M0.6 -2.6 L2.6 -2.2 L2 -0.4Z" fill="#555"/></g><rect x="642.8" y="359.7" width="6" height="6" fill="#fff" stroke="#9e9e9e" stroke-width="0.8" filter="url(#sh)"/><rect x="656.2" y="359.7" width="6" height="6" fill="#fff" stroke="#9e9e9e" stroke-width="0.8" filter="url(#sh)"/><rect x="669.6" y="359.7" width="6" height="6" fill="#fff" stroke="#9e9e9e" stroke-width="0.8" filter="url(#sh)"/><rect x="642.8" y="389.6" width="6" height="6" fill="#fff" stroke="#9e9e9e" stroke-width="0.8" filter="url(#sh)"/><rect x="669.6" y="389.6" width="6" height="6" fill="#fff" stroke="#9e9e9e" stroke-width="0.8" filter="url(#sh)"/><rect x="642.8" y="419.6" width="6" height="6" fill="#fff" stroke="#9e9e9e" stroke-width="0.8" filter="url(#sh)"/><rect x="656.2" y="419.6" width="6" height="6" fill="#fff" stroke="#9e9e9e" stroke-width="0.8" filter="url(#sh)"/><rect x="669.6" y="419.6" width="6" height="6" fill="#fff" stroke="#9e9e9e" stroke-width="0.8" filter="url(#sh)"/><g transform="translate(659.2 347.7)"><circle r="4.2" fill="#fff" stroke="#9e9e9e" stroke-width="0.8"/><path d="M1.6 -1.6 A2.2 2.2 0 1 0 2 1" fill="none" stroke="#555" stroke-width="0.9"/><path d="M0.6 -2.6 L2.6 -2.2 L2 -0.4Z" fill="#555"/></g>
</svg><!--/SLIDE-->
</body></html>
